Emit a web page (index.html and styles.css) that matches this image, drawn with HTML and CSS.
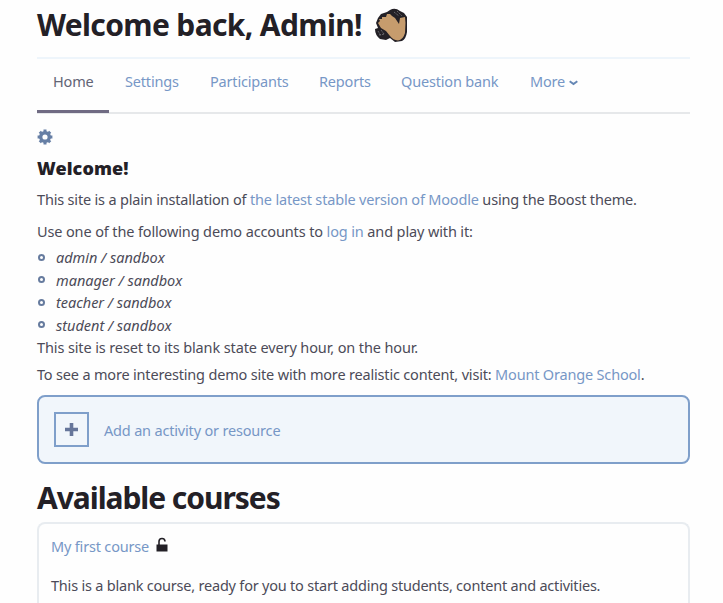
FILE: index.html
```html
<!DOCTYPE html>
<html lang="en">
<head>
<meta charset="utf-8">
<title>Welcome back, Admin!</title>
<link rel="stylesheet" href="styles.css">
</head>
<body>
<main class="page">
  <header class="page-header">
    <h1 class="title">Welcome back, Admin!</h1>
    <svg class="wave" viewBox="0 0 34 36" aria-hidden="true">
      <path d="M16 2Q21-1 26 3L30 5 33 9V24Q32 31 28 33L21 34 16 30 12 32 6 31Q1 27 1 21L4 20 2 15 4 10 7 6 13 4Z" fill="#232026"/>
      <path d="M4 15 6 13 5 11 8 11 8 9 12 9 13 6 16 6 18 8 21 10 25 16 26 10 31 9 31.5 15 31 25Q29 32 24 32.5 19 32 16 28L12 23 7 20Z" fill="#c69c6d"/>
      <path d="M20 4l5 4M23 3l5 5M4 23l3 5M7 22l3 4M5 27l6-1" stroke="#77777c" stroke-width=".8" stroke-dasharray="2 1" fill="none"/>
    </svg>
  </header>
  <nav class="tabs">
    <a class="tab active">Home</a>
    <a class="tab settings">Settings</a>
    <a class="tab participants">Participants</a>
    <a class="tab reports">Reports</a>
    <a class="tab question">Question bank</a>
    <a class="tab more">More<svg class="caret" viewBox="0 0 9 6" aria-hidden="true"><path d="M.7 1.3 4.5 4 8.3 1.3" fill="none" stroke="#6486b4" stroke-width="2"/></svg></a>
  </nav>
  <svg class="gear" viewBox="0 0 16 16" aria-hidden="true">
    <circle cx="8" cy="8" r="4.3" fill="none" stroke="#667fa5" stroke-width="3.4"/>
    <path d="M8 .6V3M8 13v2.4M.6 8H3M13 8h2.4M2.8 2.8l1.7 1.7M11.5 11.5l1.7 1.7M2.8 13.2l1.7-1.7M11.5 4.5l1.7-1.7" stroke="#667fa5" stroke-width="3"/>
  </svg>
  <h2 class="subtitle">Welcome!</h2>
  <p class="intro">This site is a plain installation of <a>the latest stable version of Moodle</a> using the Boost theme.</p>
  <p class="accounts-label">Use one of the following demo accounts to <a>log in</a> and play with it:</p>
  <ul class="accounts">
    <li>admin / sandbox</li>
    <li>manager / sandbox</li>
    <li>teacher / sandbox</li>
    <li>student / sandbox</li>
  </ul>
  <p class="reset">This site is reset to its blank state every hour, on the hour.</p>
  <p class="visit">To see a more interesting demo site with more realistic content, visit: <a>Mount Orange School</a>.</p>
  <div class="add">
    <span class="plus"><svg viewBox="0 0 13 13" aria-hidden="true"><path d="M6.5 0v13M0 6.5h13" stroke="#66769a" stroke-width="3.6"/></svg></span>
    <a class="add-label">Add an activity or resource</a>
  </div>
  <h2 class="courses-title">Available courses</h2>
  <section class="course">
    <div class="course-head">
      <a class="course-name">My first course</a>
      <svg class="lock" viewBox="0 0 12 15" aria-hidden="true"><path d="M3 8V4.5Q3 1.5 6 1.5T9 4.5" fill="none" stroke="#232026" stroke-width="1.6"/><path d="M.5 7.5h11V14.5H.5Z" fill="#232026"/></svg>
    </div>
    <p class="course-text">This is a blank course, ready for you to start adding students, content and activities.</p>
  </section>
</main>
</body>
</html>
```
FILE: styles.css
```css
* { box-sizing: border-box; }
body {
  margin: 0;
  background: #fefefe;
  color: #4c4b58;
  font: 14.5px/22px "Noto Sans", "Open Sans", sans-serif;
  letter-spacing: -0.18px;
}
h1, h2, p, ul { margin: 0; padding: 0; white-space: nowrap; }
a { color: #7797c6; }
.page {
  display: flex;
  flex-direction: column;
  width: 653px;
  height: 603px;
  margin-left: 37px;
}
.page > * { flex-shrink: 0; }
.page-header { display: flex; height: 57px; padding-top: 5px; }
.title { font-size: 30px; line-height: 40px; color: #232026; letter-spacing: -0.64px; }
.wave { width: 34px; height: 36px; margin: 3px 0 0 12px; }
.tabs {
  display: flex;
  height: 57px;
  border-top: 2px solid #eef5fb;
  border-bottom: 2px solid #e6e8ea;
}
.tab { height: 54px; padding: 11px 0 0 16px; white-space: nowrap; }
.active { width: 72px; border-bottom: 3px solid #706b83; color: #626475; }
.settings { width: 85px; }
.participants { width: 109px; }
.reports { width: 82px; }
.question { width: 129px; }
.caret { width: 9px; height: 6px; margin-left: 4px; vertical-align: 1px; }
.gear { display: block; width: 16px; height: 16px; margin-top: 15px; }
.subtitle {
  margin-top: 11px;
  font-size: 18px;
  line-height: 24px;
  font-weight: 900;
  letter-spacing: 0.1px;
  color: #232026;
}
.intro { margin-top: 8px; }
.accounts-label { margin-top: 10px; letter-spacing: -0.13px; }
.accounts { margin-top: 4px; list-style: none; font-style: italic; letter-spacing: -0.02px; }
.accounts li { display: flex; align-items: center; height: 22.5px; }
.accounts li::before {
  content: "";
  box-sizing: border-box;
  width: 7px;
  height: 7px;
  margin: 0 11px 0 1px;
  border: 2px solid #667b9e;
  border-radius: 4px;
}
.reset { letter-spacing: -0.12px; }
.visit { margin-top: 5px; }
.add {
  display: flex;
  align-items: center;
  height: 69px;
  margin-top: 10px;
  padding-left: 15px;
  border: 2px solid #7f9fca;
  border-radius: 8px;
  background: #f1f6fb;
}
.plus {
  display: flex;
  align-items: center;
  justify-content: center;
  width: 35px;
  height: 35px;
  margin-right: 15px;
  border: 2px solid #7f9fca;
}
.plus svg { width: 13px; height: 13px; }
.courses-title {
  margin-top: 14px;
  font-size: 30px;
  line-height: 40px;
  letter-spacing: -1.05px;
  color: #232026;
}
.page > .course {
  flex: 1 1 0;
  margin-top: 4px;
  padding: 11px 12px 0;
  border: 2px solid #e8ecf0;
  border-bottom: 0;
  border-radius: 8px 8px 0 0;
}
.course-head { display: flex; }
.lock { width: 12px; height: 15px; margin: 2px 0 0 7px; }
.course-text { margin-top: 17px; letter-spacing: -0.21px; }
```
